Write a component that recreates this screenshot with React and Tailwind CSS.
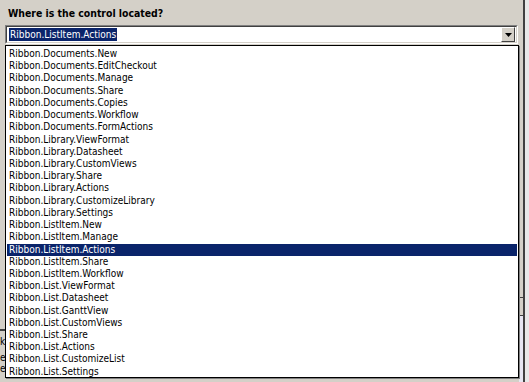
import React from "react";

const items = [
  "Ribbon.Documents.New",
  "Ribbon.Documents.EditCheckout",
  "Ribbon.Documents.Manage",
  "Ribbon.Documents.Share",
  "Ribbon.Documents.Copies",
  "Ribbon.Documents.Workflow",
  "Ribbon.Documents.FormActions",
  "Ribbon.Library.ViewFormat",
  "Ribbon.Library.Datasheet",
  "Ribbon.Library.CustomViews",
  "Ribbon.Library.Share",
  "Ribbon.Library.Actions",
  "Ribbon.Library.CustomizeLibrary",
  "Ribbon.Library.Settings",
  "Ribbon.ListItem.New",
  "Ribbon.ListItem.Manage",
  "Ribbon.ListItem.Actions",
  "Ribbon.ListItem.Share",
  "Ribbon.ListItem.Workflow",
  "Ribbon.List.ViewFormat",
  "Ribbon.List.Datasheet",
  "Ribbon.List.GanttView",
  "Ribbon.List.CustomViews",
  "Ribbon.List.Share",
  "Ribbon.List.Actions",
  "Ribbon.List.CustomizeList",
  "Ribbon.List.Settings",
];

const selected = "Ribbon.ListItem.Actions";

const App = () => {
  return (
    <div className="relative w-[529px] h-[382px] overflow-hidden bg-[#d4d0c8] text-black font-['DejaVu_Sans_Condensed','DejaVu_Sans',sans-serif] text-[10px]">
      <div className="flex h-full">
        <div className="flex-1 flex flex-col">
          <div className="pl-[8px] pt-[6px] h-[25px] font-bold text-[10.4px] leading-[14px]">
            Where is the control located?
          </div>

          {/* combo box */}
          <div className="ml-[5px] w-[513px] h-[19px] flex border-t border-l border-[#808080] border-b border-r border-b-white border-r-white">
            <div className="flex-1 flex items-center bg-white border-t border-l border-[#404040] border-b border-r border-b-[#d4d0c8] border-r-[#d4d0c8] pl-[2px]">
              <span className="bg-[#0a246a] text-white px-[1px] leading-[13px]">
                {selected}
              </span>
              <div className="ml-auto mr-[1px] w-[14px] h-[15px] flex items-center justify-center bg-[#d4d0c8] border-t border-l border-white border-b border-r border-b-[#404040] border-r-[#404040]">
                <svg width="7" height="4" viewBox="0 0 7 4">
                  <path d="M0 0h7L3.5 4z" fill="#000" />
                </svg>
              </div>
            </div>
          </div>

          {/* content behind the open list */}
          <div className="mt-[279px] flex flex-col text-[10px] leading-[11px]">
            <span className="h-[8px] border-b-2 border-[#404040] w-[5px]" />
            <span className="mt-[5px]">k</span>
            <span className="mt-[5px]">e</span>
            <span>e</span>
          </div>
        </div>

        {/* right edge: scrollbar of the page behind */}
        <div className="w-[4px] flex flex-col">
          <div className="h-[297px]" />
          <div className="h-[19px] border-y border-[#404040]" />
          <div className="flex-1 bg-[#e6e6f2]" />
        </div>
        <div className="w-[2px] bg-[#404040]" />
        <div className="w-[4px] bg-[#e8e8e8]" />
      </div>

      {/* dropped list */}
      <div className="absolute left-[5px] top-[45px] w-[514px] h-[333px] bg-white border border-[#000] shadow-[1px_1px_0_#808080] pt-[2px] px-[1px]">
        {items.map((item) => (
          <div
            key={item}
            className={
              item === selected
                ? "h-[12.23px] leading-[12.23px] pl-[2px] bg-[#0a246a] text-white whitespace-nowrap"
                : "h-[12.23px] leading-[12.23px] pl-[2px] whitespace-nowrap"
            }
          >
            {item}
          </div>
        ))}
      </div>
    </div>
  );
};

export default App;
